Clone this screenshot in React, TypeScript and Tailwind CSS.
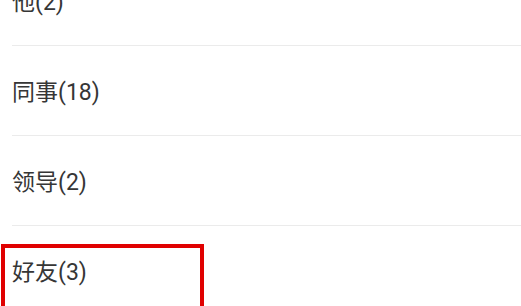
const groups = [
  { name: "他", count: 2 },
  { name: "同事", count: 18 },
  { name: "领导", count: 2 },
  { name: "好友", count: 3 },
];

export default function App() {
  return (
    <div
      className="relative h-[306px] w-[521px] overflow-hidden bg-white"
      style={{ fontFamily: 'Roboto, "Noto Sans CJK SC", sans-serif' }}
    >
      <div className="-mt-[44px]">
        {groups.map((g) => (
          <div key={g.name}>
            <div className="flex h-[89px] items-center pl-[12px] pt-[6px] text-[23px] text-[#363636]">
              {g.name}({g.count})
            </div>
            <div className="ml-[12px] h-px bg-[#ebebeb]" />
          </div>
        ))}
      </div>
      {/* highlight box */}
      <div className="absolute left-[1px] top-[244px] h-[80px] w-[203px] border-4 border-[#e00000]" />
    </div>
  );
}
